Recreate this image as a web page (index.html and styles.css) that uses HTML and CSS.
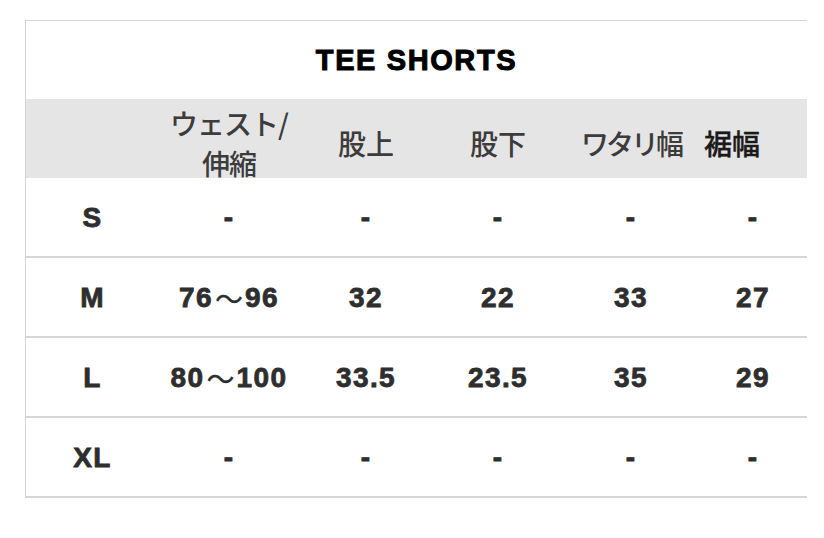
FILE: index.html
```html
<!DOCTYPE html>
<html lang="ja">
<head>
<meta charset="utf-8">
<title>TEE SHORTS</title>
<link rel="stylesheet" href="styles.css">
</head>
<body>
<div class="sheet">
  <div class="title">TEE SHORTS</div>
  <div class="row head">
    <div class="cell"></div>
    <div class="cell jp two"><span class="line">ウェスト/</span><span class="line">伸縮</span></div>
    <div class="cell jp">股上</div>
    <div class="cell jp">股下</div>
    <div class="cell jp kana">ワタリ幅</div>
    <div class="cell jp last">裾幅</div>
  </div>
  <div class="row">
    <div class="cell size">S</div>
    <div class="cell num">-</div>
    <div class="cell num">-</div>
    <div class="cell num">-</div>
    <div class="cell num">-</div>
    <div class="cell num">-</div>
  </div>
  <div class="row">
    <div class="cell size">M</div>
    <div class="cell num">76<span class="wave">〜</span>96</div>
    <div class="cell num">32</div>
    <div class="cell num">22</div>
    <div class="cell num">33</div>
    <div class="cell num">27</div>
  </div>
  <div class="row">
    <div class="cell size">L</div>
    <div class="cell num">80<span class="wave">〜</span>100</div>
    <div class="cell num">33.5</div>
    <div class="cell num">23.5</div>
    <div class="cell num">35</div>
    <div class="cell num">29</div>
  </div>
  <div class="row">
    <div class="cell size">XL</div>
    <div class="cell num">-</div>
    <div class="cell num">-</div>
    <div class="cell num">-</div>
    <div class="cell num">-</div>
    <div class="cell num">-</div>
  </div>
</div>
</body>
</html>
```
FILE: styles.css
```css
html, body {
  margin: 0;
  padding: 0;
  background: #ffffff;
}
body {
  padding: 20px 0 0 25px;
  font-family: "Liberation Sans", Arial, "Noto Sans CJK JP", sans-serif;
}
.sheet {
  width: 782px;
  border-left: 1px solid #d4d4d4;
  border-top: 1px solid #d4d4d4;
  box-sizing: border-box;
}
.title {
  height: 78px;
  display: flex;
  align-items: center;
  justify-content: center;
  font-weight: bold;
  font-size: 29px;
  letter-spacing: 1.6px;
  color: #000;
  -webkit-text-stroke: 1px #000;
}
.row {
  display: grid;
  grid-template-columns: 133px 140px 134px 130px 136px 108px;
  height: 80px;
  border-bottom: 2px solid #d6d6d6;
  box-sizing: border-box;
}
.row.head {
  height: 79px;
  background: #e6e5e6;
  border-bottom: none;
}
.cell {
  display: flex;
  align-items: center;
  justify-content: center;
  text-align: center;
}
.jp {
  font-family: "Noto Sans CJK JP", sans-serif;
  font-size: 28px;
  font-weight: 500;
  color: #3c3c3c;
  line-height: 36px;
  padding-top: 4px;
}
.jp.two {
  flex-direction: column;
  padding-top: 4px;
  letter-spacing: -1px;
}
.jp.two .line {
  display: block;
  height: 40px;
  line-height: 40px;
  flex-shrink: 0;
}
.jp.kana {
  letter-spacing: -3px;
}
.jp.last {
  justify-content: flex-start;
  padding-left: 5px;
  color: #1a1a1a;
  font-weight: 500;
  -webkit-text-stroke: 0.4px #1a1a1a;
}
.num, .size {
  font-weight: bold;
  font-size: 28px;
  color: #2e2e2e;
  letter-spacing: 1.4px;
  padding-top: 2px;
  -webkit-text-stroke: 0.8px #2e2e2e;
}
.wave {
  font-family: "Noto Sans CJK JP", sans-serif;
  font-weight: 400;
  font-size: 28px;
  letter-spacing: 0;
  margin: 0 2px;
  -webkit-text-stroke: 0.3px #2e2e2e;
}
```
